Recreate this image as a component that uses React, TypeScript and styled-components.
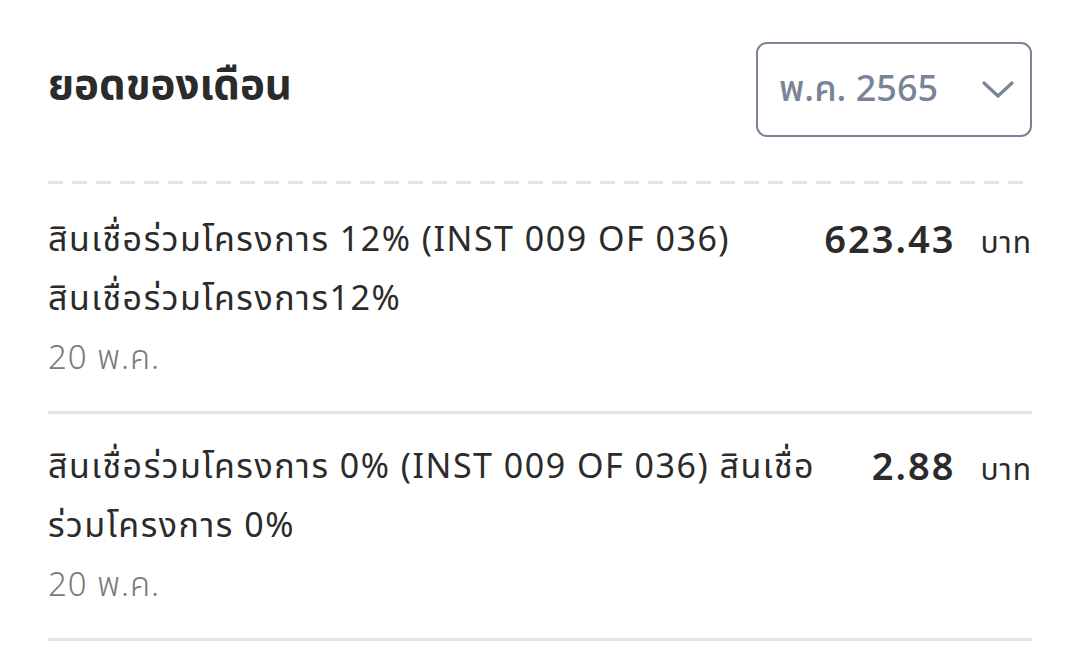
import React from "react";
import styled, { createGlobalStyle } from "styled-components";

const Global = createGlobalStyle`
  html, body { margin: 0; padding: 0; background: #ffffff; }
  body { font-family: "Noto Sans", "Noto Sans Thai", "Noto Sans Thai UI", "Open Sans", sans-serif; color: #2b2b2b; }
`;

const Page = styled.div`
  padding: 0 48px;
  width: 1080px;
  box-sizing: border-box;
`;

const Header = styled.header`
  display: flex;
  align-items: center;
  justify-content: space-between;
  padding-top: 42px;
`;

const Title = styled.h1`
  margin: 0 0 14px;
  font-size: 42px;
  font-weight: 700;
  color: #2b2b2b;
  line-height: 1;
`;

const MonthSelect = styled.button`
  display: flex;
  align-items: center;
  justify-content: space-between;
  box-sizing: border-box;
  width: 276px;
  height: 95px;
  padding: 0 15px 0 21px;
  border: 2.5px solid #7a8496;
  border-radius: 11px;
  background: #ffffff;
  color: #7a8496;
  font-family: inherit;
  font-size: 36px;
  font-weight: 500;
`;

const DashedRule = styled.div`
  margin: 44px 0 3px;
  height: 3px;
  background: repeating-linear-gradient(to right, #e4e4e4 0 15px, transparent 15px 24px);
`;

const Row = styled.div`
  display: flex;
  align-items: flex-start;
  padding: 22px 0 25px;
  border-bottom: 3px solid #e3e3e3;
`;

const Details = styled.div`
  flex: 0 0 772px;
  min-width: 0;
`;

const Description = styled.div`
  font-size: 34px;
  line-height: 59px;
  letter-spacing: 1.5px;
  color: #2b2b2b;
`;

const Word = styled.span`
  white-space: nowrap;
`;

const DateText = styled.div`
  font-size: 33px;
  line-height: 59px;
  letter-spacing: 1px;
  color: #7a7a7a;
  font-weight: 300;
`;

const AmountBox = styled.div`
  flex: 1;
  display: flex;
  justify-content: flex-end;
  align-items: baseline;
  gap: 25px;
  line-height: 59px;
  white-space: nowrap;
`;

const Amount = styled.span`
  font-size: 38px;
  font-weight: 600;
  letter-spacing: 2px;
  color: #2b2b2b;
`;

const Unit = styled.span`
  font-size: 30px;
  letter-spacing: 1px;
  color: #2b2b2b;
`;

const Chevron = () => (
  <svg width="34" height="20" viewBox="0 0 34 20" fill="none">
    <path d="M3 3 L17 16 L31 3" stroke="#7a8496" strokeWidth="3.2" strokeLinecap="round" strokeLinejoin="round" />
  </svg>
);

const items = [
  {
    desc: "สินเชื่อร่วมโครงการ 12% (INST 009 OF 036) สินเชื่อร่วมโครงการ12%",
    date: "20 พ.ค.",
    amount: "623.43",
  },
  {
    desc: "สินเชื่อร่วมโครงการ 0% (INST 009 OF 036) สินเชื่อร่วมโครงการ 0%",
    date: "20 พ.ค.",
    amount: "2.88",
  },
];

// Keep the word "สินเชื่อ" together when the line wraps.
const renderDesc = (text: string) =>
  text.split("สินเชื่อ").flatMap((part, i) =>
    i === 0 ? [part] : [<Word key={i}>สินเชื่อ</Word>, part]
  );

export default function App() {
  return (
    <Page>
      <Global />
      <Header>
        <Title>ยอดของเดือน</Title>
        <MonthSelect>
          <span>พ.ค. 2565</span>
          <Chevron />
        </MonthSelect>
      </Header>
      <DashedRule />
      {items.map((it, i) => (
        <Row key={i}>
          <Details>
            <Description>{renderDesc(it.desc)}</Description>
            <DateText>{it.date}</DateText>
          </Details>
          <AmountBox>
            <Amount>{it.amount}</Amount>
            <Unit>บาท</Unit>
          </AmountBox>
        </Row>
      ))}
    </Page>
  );
}
